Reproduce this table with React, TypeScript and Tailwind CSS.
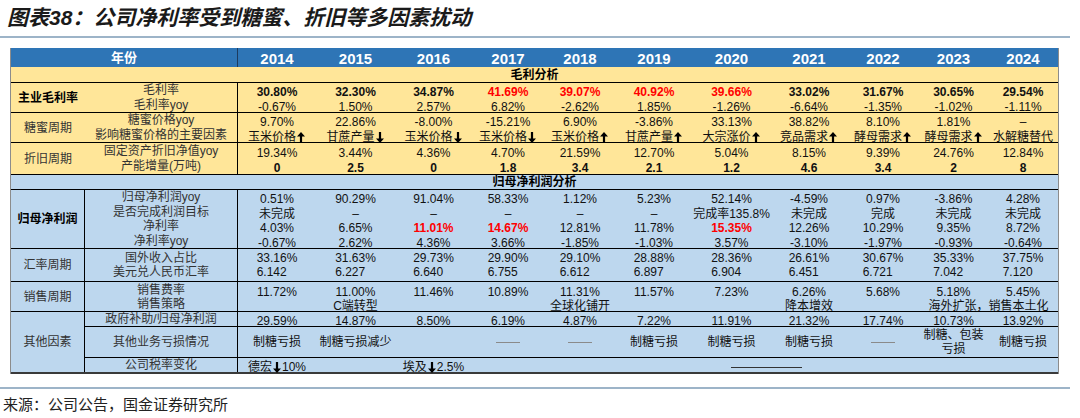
import React from "react";

const DATA_COLS =
  "grid grid-cols-[78px_79px_77px_72px_72px_76px_79px_76px_72px_69px_70px]";

type CellV =
  | string
  | {
      t?: React.ReactNode;
      b?: boolean;
      r?: boolean;
      span2?: boolean;
      dash?: boolean;
    };

const Arrow = ({ down }: { down?: boolean }) => (
  <svg
    width="8"
    height="11"
    viewBox="0 0 8 11"
    className={`inline-block mx-[1px] ${down ? "rotate-180" : ""}`}
  >
    <path d="M4 0 L8 4.5 L5.1 4.5 L5.1 11 L2.9 11 L2.9 4.5 L0 4.5 Z" fill="#000" />
  </svg>
);
const Up = () => <Arrow />;
const Down = () => <Arrow down />;

function Cell({ v }: { v: CellV }) {
  if (typeof v === "string") {
    return (
      <div className="flex items-center justify-center whitespace-nowrap">
        {v}
      </div>
    );
  }
  if (v.dash) {
    return (
      <div className="flex items-center justify-center">
        <div className="w-[24px] h-px bg-[#8a8a8a]" />
      </div>
    );
  }
  return (
    <div
      className={`flex items-center justify-center whitespace-nowrap ${
        v.span2 ? "col-span-2" : ""
      } ${v.b ? "font-bold" : ""} ${v.r ? "text-[#ff0000]" : "text-[#111]"}`}
    >
      {v.t}
    </div>
  );
}

function Line({ cells, lh = "h-[15px]" }: { cells: CellV[]; lh?: string }) {
  return (
    <div className={`${DATA_COLS} ${lh}`}>
      {cells.map((c, i) => (
        <Cell key={i} v={c} />
      ))}
    </div>
  );
}

function Group({
  label,
  bold,
  sep,
  bg,
  h,
  last,
  children,
}: {
  label: string;
  bold?: boolean;
  sep?: boolean;
  bg: string;
  h: string;
  last?: boolean;
  children: React.ReactNode;
}) {
  return (
    <div
      className={`flex ${h} ${bg} ${
        last ? "border-b-2 border-[#3a3a3a]" : "border-b border-black"
      }`}
    >
      <div
        className={`w-[74px] shrink-0 flex items-center justify-center text-[12px] ${
          bold ? "font-bold text-black" : "text-[#333]"
        } ${sep ? "border-r border-black" : ""}`}
      >
        {label}
      </div>
      <div className="flex-1 flex flex-col">{children}</div>
    </div>
  );
}

function Sub({
  labels,
  h,
  border,
  lh = "leading-[15px]",
  children,
}: {
  labels: string[];
  h?: string;
  border?: boolean;
  lh?: string;
  children: React.ReactNode;
}) {
  return (
    <div
      className={`flex ${h ?? "flex-1"} ${border ? "border-b border-black" : ""}`}
    >
      <div
        className={`w-[153px] shrink-0 border-r border-black flex flex-col justify-center items-center text-[12px] text-[#333] ${lh}`}
      >
        {labels.map((l, i) => (
          <div key={i} className="whitespace-nowrap">
            {l}
          </div>
        ))}
      </div>
      <div className="flex-1 flex flex-col justify-center">{children}</div>
    </div>
  );
}

const years = [
  "2014",
  "2015",
  "2016",
  "2017",
  "2018",
  "2019",
  "2020",
  "2021",
  "2022",
  "2023",
  "2024",
];

const b = (t: string): CellV => ({ t, b: true });
const red = (t: string): CellV => ({ t, b: true, r: true });

const fx = [
  ["33.16%", "6.142"],
  ["31.63%", "6.227"],
  ["29.73%", "6.640"],
  ["29.90%", "6.755"],
  ["29.10%", "6.612"],
  ["28.88%", "6.897"],
  ["28.36%", "6.904"],
  ["26.61%", "6.451"],
  ["30.67%", "6.721"],
  ["35.33%", "7.042"],
  ["37.75%", "7.120"],
];

export default function App() {
  return (
    <div className="w-[1080px] h-[418px] bg-white overflow-hidden text-[#111] font-['Liberation_Sans','Noto_Sans_CJK_SC',sans-serif]">
      {/* Title */}
      <div className="h-[36px] flex items-center pl-[7px] text-[21px] font-bold italic text-[#1a1a1a] leading-[24px]">
        图表38：公司净利率受到糖蜜、折旧等多因素扰动
      </div>
      <div className="w-[1070px] h-[2px] bg-[#9db4c8]" />

      {/* Table */}
      <div className="mt-[10px] ml-[10px] w-[1049px] border-l border-r border-[#8c8c8c] text-[12px]">
        {/* header */}
        <div className="flex h-[19px] bg-[#2e75b6] text-white font-bold">
          <div className="w-[227px] shrink-0 border-r border-[#1d3b5e] flex items-center justify-center text-[13px]">
            年份
          </div>
          <div className={`${DATA_COLS} flex-1`}>
            {years.map((y) => (
              <div
                key={y}
                className="flex items-center justify-center text-[15px]"
              >
                {y}
              </div>
            ))}
          </div>
        </div>

        {/* 毛利分析 */}
        <div className="h-[16px] bg-[#ffe699] border-b border-black flex items-center justify-center font-bold text-black">
          毛利分析
        </div>

        <Group label="主业毛利率" bold bg="bg-[#ffe699]" h="h-[30px]">
          <Sub labels={["毛利率", "毛利率yoy"]}>
            <Line
              cells={[
                b("30.80%"),
                b("32.30%"),
                b("34.87%"),
                red("41.69%"),
                red("39.07%"),
                red("40.92%"),
                red("39.66%"),
                b("33.02%"),
                b("31.67%"),
                b("30.65%"),
                b("29.54%"),
              ]}
            />
            <Line
              cells={[
                "-0.67%",
                "1.50%",
                "2.57%",
                "6.82%",
                "-2.62%",
                "1.85%",
                "-1.26%",
                "-6.64%",
                "-1.35%",
                "-1.02%",
                "-1.11%",
              ]}
            />
          </Sub>
        </Group>

        <Group label="糖蜜周期" bg="bg-[#ffe699]" h="h-[30px]">
          <Sub labels={["糖蜜价格yoy", "影响糖蜜价格的主要因素"]}>
            <Line
              cells={[
                "9.70%",
                "22.86%",
                "-8.00%",
                "-15.21%",
                "6.90%",
                "-3.86%",
                "33.13%",
                "38.82%",
                "8.10%",
                "1.81%",
                "–",
              ]}
            />
            <Line
              cells={[
                { t: <>玉米价格<Up /></> },
                { t: <>甘蔗产量<Down /></> },
                { t: <>玉米价格<Down /></> },
                { t: <>玉米价格<Down /></> },
                { t: <>玉米价格<Up /></> },
                { t: <>甘蔗产量<Up /></> },
                { t: <>大宗涨价<Up /></> },
                { t: <>竞品需求<Up /></> },
                { t: <>酵母需求<Up /></> },
                { t: <>酵母需求<Up /></> },
                "水解糖替代",
              ]}
            />
          </Sub>
        </Group>

        <Group label="折旧周期" bg="bg-[#ffe699]" h="h-[32px]">
          <Sub labels={["固定资产折旧净值yoy", "产能增量(万吨)"]}>
            <Line
              cells={[
                "19.34%",
                "3.44%",
                "4.36%",
                "4.70%",
                "21.59%",
                "12.70%",
                "5.04%",
                "8.15%",
                "9.39%",
                "24.76%",
                "12.84%",
              ]}
            />
            <Line
              cells={[
                b("0"),
                b("2.5"),
                b("0"),
                b("1.8"),
                b("3.4"),
                b("2.1"),
                b("1.2"),
                b("4.6"),
                b("3.4"),
                b("2"),
                b("8"),
              ]}
            />
          </Sub>
        </Group>

        {/* 归母净利润分析 */}
        <div className="h-[15px] bg-[#bdd7ee] border-b border-black flex items-center justify-center font-bold text-black">
          归母净利润分析
        </div>

        <Group label="归母净利润" bold sep bg="bg-[#bdd7ee]" h="h-[59px]">
          <Sub
            labels={["归母净利润yoy", "是否完成利润目标", "净利率", "净利率yoy"]}
            lh="leading-[14.5px]"
          >
            <Line
              lh="h-[14.5px]"
              cells={[
                "0.51%",
                "90.29%",
                "91.04%",
                "58.33%",
                "1.12%",
                "5.23%",
                "52.14%",
                "-4.59%",
                "0.97%",
                "-3.86%",
                "4.28%",
              ]}
            />
            <Line
              lh="h-[14.5px]"
              cells={[
                "未完成",
                "–",
                "–",
                "–",
                "–",
                "–",
                "完成率135.8%",
                "未完成",
                "完成",
                "未完成",
                "未完成",
              ]}
            />
            <Line
              lh="h-[14.5px]"
              cells={[
                "4.03%",
                "6.65%",
                red("11.01%"),
                red("14.67%"),
                "12.81%",
                "11.78%",
                red("15.35%"),
                "12.26%",
                "10.29%",
                "9.35%",
                "8.72%",
              ]}
            />
            <Line
              lh="h-[14.5px]"
              cells={[
                "-0.67%",
                "2.62%",
                "4.36%",
                "3.66%",
                "-1.85%",
                "-1.03%",
                "3.57%",
                "-3.10%",
                "-1.97%",
                "-0.93%",
                "-0.64%",
              ]}
            />
          </Sub>
        </Group>

        <Group label="汇率周期" sep bg="bg-[#bdd7ee]" h="h-[33px]">
          <Sub labels={["国外收入占比", "美元兑人民币汇率"]} lh="leading-[14px]">
            <div className={DATA_COLS}>
              {fx.map(([p, r], i) => (
                <div key={i} className="flex justify-center">
                  <div className="flex flex-col items-start leading-[14px] text-[#111]">
                    <div>{p}</div>
                    <div>{r}</div>
                  </div>
                </div>
              ))}
            </div>
          </Sub>
        </Group>

        <Group label="销售周期" sep bg="bg-[#bdd7ee]" h="h-[30px]">
          <Sub labels={["销售费率", "销售策略"]} lh="leading-[14px]">
            <Line
              lh="h-[14px]"
              cells={[
                "11.72%",
                "11.00%",
                "11.46%",
                "10.89%",
                "11.31%",
                "11.57%",
                "7.23%",
                "6.26%",
                "5.68%",
                "5.18%",
                "5.45%",
              ]}
            />
            <Line
              lh="h-[14px]"
              cells={[
                "",
                "C端转型",
                "",
                "",
                "全球化铺开",
                "",
                "",
                "降本增效",
                "",
                { t: "海外扩张，销售本土化", span2: true },
              ]}
            />
          </Sub>
        </Group>

        <Group label="其他因素" sep last bg="bg-[#bdd7ee]" h="h-[62px]">
          <Sub labels={["政府补助/归母净利润"]} h="h-[15px]" border lh="leading-[14px]">
            <Line
              lh="h-[14px]"
              cells={[
                "29.59%",
                "14.87%",
                "8.50%",
                "6.19%",
                "4.87%",
                "7.22%",
                "11.91%",
                "21.32%",
                "17.74%",
                "10.73%",
                "13.92%",
              ]}
            />
          </Sub>
          <Sub labels={["其他业务亏损情况"]} h="h-[31px]" border>
            <div className={`${DATA_COLS} h-[30px]`}>
              <Cell v="制糖亏损" />
              <Cell v="制糖亏损减少" />
              <Cell v="" />
              <Cell v={{ dash: true }} />
              <Cell v={{ dash: true }} />
              <Cell v="制糖亏损" />
              <Cell v="制糖亏损" />
              <Cell v="制糖亏损" />
              <Cell v={{ dash: true }} />
              <div className="flex flex-col items-center justify-center leading-[14px] whitespace-nowrap">
                <div>制糖、包装</div>
                <div>亏损</div>
              </div>
              <Cell v="制糖亏损" />
            </div>
          </Sub>
          <Sub labels={["公司税率变化"]} h="h-[14px]" lh="leading-[14px]">
            <div className={`${DATA_COLS} h-[14px]`}>
              <Cell v={{ t: <>德宏<Down />10%</> }} />
              <Cell v="" />
              <Cell v={{ t: <>埃及<Down />2.5%</> }} />
              <Cell v="" />
              <Cell v="" />
              <Cell v="" />
              <div className="col-span-2 flex items-center justify-center">
                <div className="w-[71px] h-px bg-[#333] mr-[7px]" />
              </div>
            </div>
          </Sub>
        </Group>
      </div>

      <div className="mt-[13px] w-[1070px] h-[2px] bg-[#9db4c8]" />
      <div className="mt-[7px] pl-[3px] text-[15px] leading-[18px] text-[#222]">
        来源：公司公告，国金证券研究所
      </div>
    </div>
  );
}
